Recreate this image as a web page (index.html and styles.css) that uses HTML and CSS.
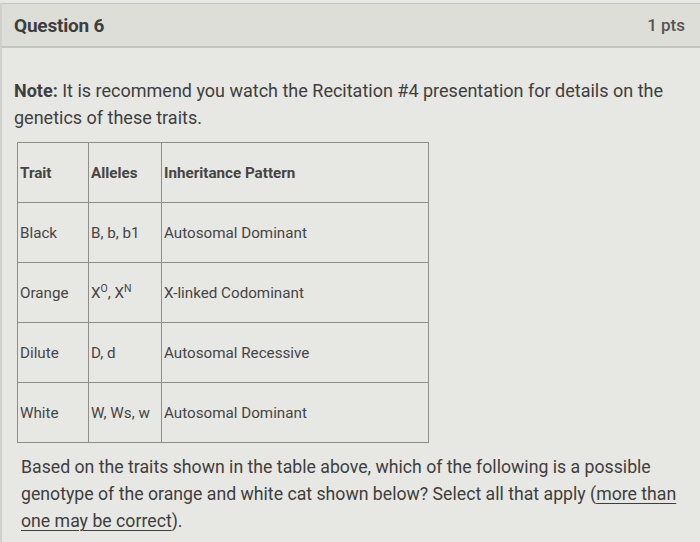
FILE: index.html
```html
<!DOCTYPE html>
<html lang="en">
<head>
<meta charset="utf-8">
<title>Question 6</title>
<link rel="stylesheet" href="styles.css">
</head>
<body>
<div class="question">
  <div class="q-header">
    <span class="q-title">Question 6</span>
    <span class="q-pts">1 pts</span>
  </div>
  <div class="q-body">
    <p class="note"><strong>Note:</strong> It is recommend you watch the Recitation #4 presentation for details on the genetics of these traits.</p>
    <table class="traits">
      <tr class="head"><th class="c1">Trait</th><th class="c2">Alleles</th><th class="c3">Inheritance Pattern</th></tr>
      <tr><td>Black</td><td>B, b, b1</td><td>Autosomal Dominant</td></tr>
      <tr><td>Orange</td><td>X<sup>O</sup>, X<sup>N</sup></td><td>X-linked Codominant</td></tr>
      <tr><td>Dilute</td><td>D, d</td><td>Autosomal Recessive</td></tr>
      <tr><td>White</td><td>W, Ws, w</td><td>Autosomal Dominant</td></tr>
    </table>
    <p class="prompt">Based on the traits shown in the table above, which of the following is a possible genotype of the orange and white cat shown below? Select all that apply (<u>more than one may be correct</u>).</p>
  </div>
</div>
</body>
</html>
```
FILE: styles.css
```css
html, body {
  margin: 0;
  padding: 0;
  background: #e7e7e3;
}
body {
  font-family: Roboto, "Liberation Sans", sans-serif;
  color: #3e3e3e;
  width: 700px;
  height: 542px;
  overflow: hidden;
}
.question {
  border-left: 2px solid #cfcfcb;
  height: 542px;
}
.q-header {
  display: flex;
  justify-content: space-between;
  align-items: center;
  height: 42px;
  margin-top: 3px;
  border-top: 1px solid #c4c4c0;
  border-bottom: 2px solid #c4c4c0;
  background: #deded9;
  padding: 0 15px 0 12px;
}
.q-title {
  font-weight: 700;
  font-size: 19px;
  letter-spacing: -0.2px;
}
.q-pts {
  font-weight: 500;
  font-size: 17px;
  color: #555;
}
.q-body {
  padding: 0 0 0 12px;
}
.note {
  margin: 29px 0 0 0;
  font-size: 18px;
  line-height: 27px;
  width: 668px;
}
.note strong {
  font-weight: 700;
}
.traits {
  border-collapse: collapse;
  margin: 11px 0 0 3px;
  font-size: 15.2px;
  color: #454545;
}
.traits th, .traits td {
  border: 1.5px solid #8d8d8a;
  height: 59px;
  padding: 0 2px;
  text-align: left;
  vertical-align: middle;
}
.traits th {
  font-weight: 700;
}
.c1 { width: 66px; }
.c2 { width: 68px; }
.c3 { width: 262px; }
.traits sup {
  font-size: 10.5px;
  vertical-align: 6px;
  line-height: 0;
}
.prompt {
  margin: 11px 0 0 7px;
  font-size: 17.7px;
  line-height: 27px;
  width: 662px;
}
.prompt u {
  text-decoration-thickness: 1px;
  text-underline-offset: 3px;
}
```
